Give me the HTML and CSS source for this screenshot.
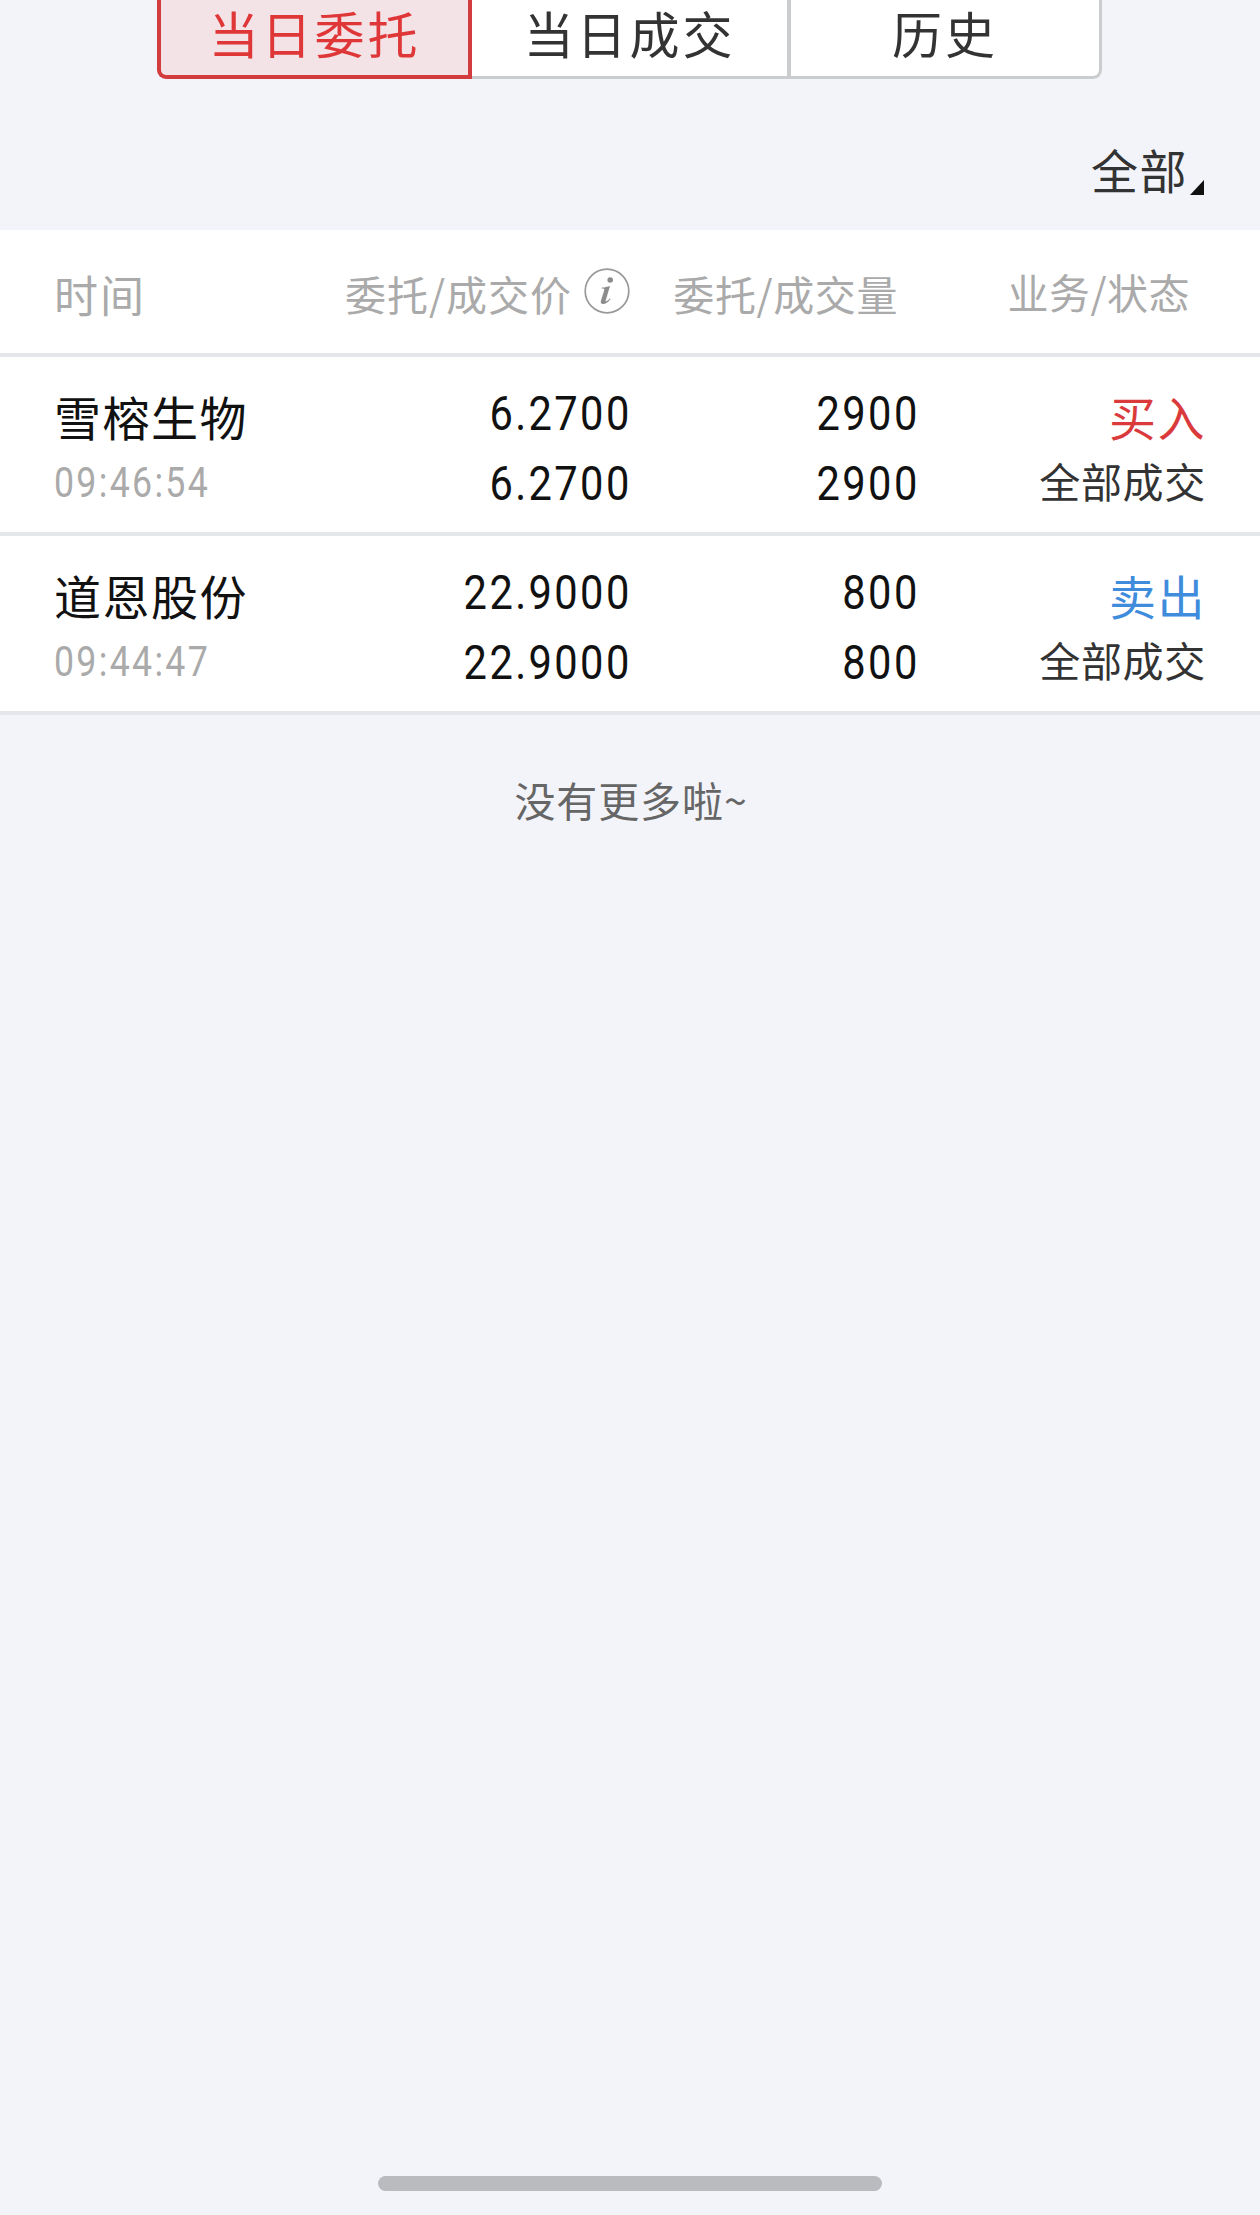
FILE: index.html
```html
<!DOCTYPE html>
<html lang="zh-CN">
<head>
    <meta charset="UTF-8">
    <meta name="viewport" content="width=device-width, initial-scale=1.0">
    <title>当日委托</title>
    <link rel="stylesheet" href="styles.css">
</head>
<body>
    <div class="tabs">
        <div class="tab active">当日委托</div>
        <div class="tab">当日成交</div>
        <div class="tab">历史</div>
    </div>

    <div class="filter">
        <span>全部</span>
        <svg class="corner" viewBox="0 0 14 15"><path d="M14 0V15H0z" fill="#111"/></svg>
    </div>

    <div class="orders">
        <div class="row head">
            <div class="head-time">时间</div>
            <div class="head-price">
                <span>委托/成交价</span>
                <svg class="info" viewBox="0 0 46 46">
                    <circle cx="23" cy="23" r="21.8" fill="none" stroke="#999" stroke-width="1.7"/>
                    <circle cx="26.2" cy="12" r="2.8" fill="#8c8c8c"/>
                    <path d="M17.8 19.6C21 19.4 23.5 18.8 26 18L21.7 32.6C21.4 34 22.4 33.8 25.8 30.4L26.6 31C23.6 35 21 36 19 36C17 36 16.4 34.6 17 32.6L20.2 22.2C20.6 20.8 20 20.4 17.7 20.4z" fill="#8c8c8c"/>
                </svg>
            </div>
            <div class="head-amount">委托/成交量</div>
            <div class="head-status">业务/状态</div>
        </div>

        <div class="row">
            <div class="stock">
                <div class="name">雪榕生物</div>
                <div class="time">09:46:54</div>
            </div>
            <div class="num">
                <div>6.2700</div>
                <div>6.2700</div>
            </div>
            <div class="num">
                <div>2900</div>
                <div>2900</div>
            </div>
            <div class="status">
                <div class="side buy">买入</div>
                <div class="state">全部成交</div>
            </div>
        </div>

        <div class="row">
            <div class="stock">
                <div class="name">道恩股份</div>
                <div class="time">09:44:47</div>
            </div>
            <div class="num">
                <div>22.9000</div>
                <div>22.9000</div>
            </div>
            <div class="num">
                <div>800</div>
                <div>800</div>
            </div>
            <div class="status">
                <div class="side sell">卖出</div>
                <div class="state">全部成交</div>
            </div>
        </div>
    </div>

    <div class="no-more">没有更多啦~</div>
    <div class="home-bar"></div>
</body>
</html>
```
FILE: styles.css
```css
* {
    box-sizing: border-box;
}

body {
    margin: 0;
    height: 2215px;
    display: flex;
    flex-direction: column;
    background-color: #f3f4f9;
    color: #333;
    font-family: "Noto Sans CJK SC", sans-serif;
    white-space: nowrap;
    overflow: hidden;
}

/* Tabs */
.tabs {
    display: flex;
    width: 945px;
    height: 79px;
    margin-left: 157px;
}

.tab {
    width: 315px;
    height: 79px;
    background-color: #fff;
    border-right: 4px solid #cbcccd;
    border-bottom: 3px solid #cbcccd;
    font-size: 50px;
    letter-spacing: 2.9px;
    line-height: 64px;
    text-align: center;
}

.tab.active {
    width: 315px;
    background-color: #f3e2e6;
    border: 4px solid #d23c3f;
    border-top: none;
    border-bottom-left-radius: 9px;
    color: #df3638;
}

.tab:nth-child(2) {
    width: 319px;
}

.tab:last-child {
    width: 311px;
    border-right-width: 3px;
    border-bottom-right-radius: 9px;
}

/* Filter */
.filter {
    display: flex;
    justify-content: flex-end;
    height: 151px;
    padding: 56px 56px 0 0;
    font-size: 47px;
    letter-spacing: 1.5px;
    line-height: 68px;
}

.corner {
    width: 14px;
    height: 15px;
    margin: 45px 0 0 2px;
}

/* Order list */
.row {
    display: grid;
    grid-template-columns: 246px 330px 288px 288px;
    height: 179px;
    padding-left: 54px;
    background-color: #fff;
    border-bottom: 4px solid #e5e6ea;
}

.head {
    height: 127px;
    color: #aaa;
    font-size: 41px;
    letter-spacing: 0.8px;
    line-height: 126px;
}

.head-time {
    font-size: 44px;
    letter-spacing: 2px;
    line-height: 128px;
}

.head-price {
    display: flex;
    justify-content: flex-end;
    letter-spacing: 1px;
}

.info {
    width: 46px;
    height: 46px;
    margin: 38px 0 0 12px;
}

.head-amount {
    padding-right: 20px;
    letter-spacing: 0.6px;
    text-align: right;
}

.head-status {
    padding-right: 16px;
    letter-spacing: 0.5px;
    line-height: 122px;
    text-align: right;
}

.name,
.side {
    margin-top: 26px;
    height: 66px;
    font-size: 47px;
    letter-spacing: 1.5px;
    line-height: 66px;
}

.name {
    color: #111;
}

/* digits are squeezed to a narrow DIN-like shape */
.time {
    height: 60px;
    padding-top: 1px;
    color: #aaa;
    font-family: Roboto, sans-serif;
    font-size: 42px;
    font-weight: 380;
    letter-spacing: 2.7px;
    line-height: 66px;
    transform: scaleX(0.85);
    transform-origin: left;
}

.num {
    padding-top: 22px;
    color: #111;
    font-family: Roboto, sans-serif;
    font-size: 49px;
    font-weight: 400;
    letter-spacing: 2.8px;
    line-height: 70px;
    text-align: right;
    transform: scaleX(0.85);
    transform-origin: right;
}

.num div {
    margin-right: -2px;
}

.status {
    text-align: right;
}

.buy {
    color: #da3a3b;
}

.sell {
    color: #3f8cdd;
}

.state {
    font-size: 41px;
    letter-spacing: 0.7px;
    line-height: 62px;
}

/* Footer */
.no-more {
    height: 80px;
    margin-top: 47px;
    padding-left: 2px;
    color: #666;
    font-size: 41px;
    letter-spacing: 0.9px;
    line-height: 74px;
    text-align: center;
}

.home-bar {
    width: 504px;
    height: 15px;
    margin: auto auto 24px;
    border-radius: 8px;
    background-color: #b9bbbf;
}
```
